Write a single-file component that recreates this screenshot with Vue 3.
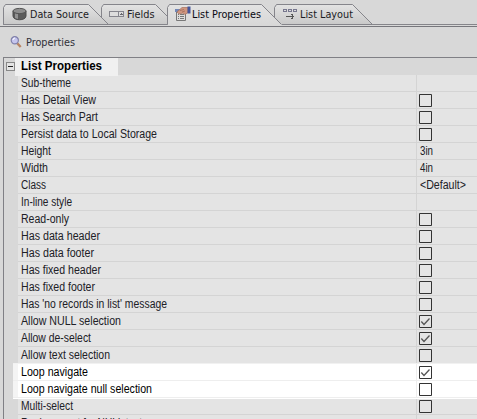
<script setup>
const tabs = [
  { name: 'Data Source', icon: 'db', w: 106, l: 59 },
  { name: 'Fields', icon: 'field', w: 75, l: 27.5 },
  { name: 'List Properties', icon: 'props', w: 115, l: 69, active: true },
  { name: 'List Layout', icon: 'layout', w: 99, l: 53 }
]
const rows = [
  ['Sub-theme', '', 50], ['Has Detail View', false, 75], ['Has Search Part', false, 77],
  ['Persist data to Local Storage', false, 136], ['Height', '3in', 30], ['Width', '4in', 27],
  ['Class', '<Default>', 25], ['In-line style', '', 51], ['Read-only', false, 48],
  ['Has data header', false, 79], ['Has data footer', false, 73], ['Has fixed header', false, 80],
  ['Has fixed footer', false, 74], ["Has 'no records in list' message", false, 146],
  ['Allow NULL selection', true, 100], ['Allow de-select', true, 70],
  ['Allow text selection', false, 89], ['Loop navigate', true, 67],
  ['Loop navigate null selection', false, 131], ['Multi-select', false, 52],
  ['Replacement for NULL text', '', 121]
]
const valueWidth = { '3in': 13, '4in': 13, '<Default>': 46 }
const shape = (w, active) => `M.5 20.5V3.5L2.5 .5H${w - 20.5}L${w - .5} 20.5${active ? '' : 'Z'}`
</script>

<template>
  <main class="window">
    <nav class="tabs">
      <div v-for="tab in tabs" :key="tab.name" class="tab" :class="[tab.icon, { active: tab.active }]">
        <svg class="outline" :width="tab.w" height="22">
          <defs><linearGradient :id="tab.icon" x2="0" y2="1"><stop stop-color="#e3e3e3" /><stop offset="1" :stop-color="tab.active ? '#d8d8d8' : '#c9c9c9'" /></linearGradient></defs>
          <path v-if="tab.active" :d="`M1 20h${tab.w - 1}v1.5H1z`" fill="#d8d8d8" />
          <path :d="shape(tab.w, tab.active)" :fill="`url(#${tab.icon})`" stroke="#85858b" />
        </svg>
        <svg v-if="tab.icon === 'db'" class="icon" width="16" height="16">
          <path d="M1 5v5c0 5 13 5 13 0V5" fill="#5b5b5b" stroke="#4c4c4c" />
          <path d="M3 7v5l3 1V8" fill="#929292" />
          <ellipse cx="7.5" cy="5" rx="6.5" ry="2.6" fill="#8d8d8d" stroke="#555" />
        </svg>
        <svg v-else-if="tab.icon === 'field'" class="icon" width="16" height="16" shape-rendering="crispEdges">
          <path d="M.5 5.5h14v5H.5zM9.5 5.5v5" fill="#ddd" stroke="#85858d" />
          <path d="M12 7v1h-1v1h3V8h-1V7" fill="#68686f" />
        </svg>
        <svg v-else-if="tab.icon === 'props'" class="icon" width="16" height="16">
          <path d="M1.5 4.5h9v10h-9z" fill="#ddd" stroke="#777" />
          <path d="M0 3h6v3H0z" fill="#7387b5" />
          <path d="M3 8.5h1m1 0h4M3 10.5h1m1 0h4M3 12.5h1m1 0h4" stroke="#777" />
          <path d="M2 6l5-4.5h6v5l-3 2-2-1.5-4 1z" fill="#cf9680" stroke="#a8705c" stroke-width=".7" />
          <path d="M5 4.5l4-1M7 6l3-1" stroke="#9b6655" stroke-width=".7" />
          <path d="M12.5 .5h3v7h-3z" fill="#46569a" />
        </svg>
        <svg v-else class="icon" width="16" height="16" shape-rendering="crispEdges">
          <path d="M.5 3.5h3v2h-3zM5.5 3.5h3v2h-3zM10.5 3.5h3v2h-3z" fill="none" stroke="#77778e" />
          <path d="M3 10.5h8M9.5 8v5M8.5 8v1M8.5 12v1" fill="none" stroke="#555" />
        </svg>
        <svg class="caption" :width="tab.l + 2" height="18"><text x="0" y="12" :textLength="tab.l" lengthAdjust="spacingAndGlyphs">{{ tab.name }}</text></svg>
      </div>
    </nav>
    <header class="toolbar">
      <svg class="lens" width="14" height="14"><path d="M7 7l3.7 4" stroke="#b88463" stroke-width="2.4" /><circle cx="4.8" cy="4.3" r="3.6" fill="#c5c5ee" stroke="#8080aa" stroke-width="1.2" /><path d="M3 4q0-2 2-2" fill="none" stroke="#fff" /></svg>
      <svg class="caption" width="54" height="18"><text x="0" y="13" textLength="49" lengthAdjust="spacingAndGlyphs">Properties</text></svg>
    </header>
    <section class="grid">
      <header class="group">
        <svg class="collapse" width="9" height="9" shape-rendering="crispEdges"><path d="M.5 .5h8v8h-8z" fill="#e4e4e4" stroke="#888" /><path d="M2 4.5h5" stroke="#222" /></svg>
        <h1><svg width="100" height="18"><text x="6" y="12" textLength="81" lengthAdjust="spacingAndGlyphs">List Properties</text></svg></h1>
      </header>
      <div v-for="([name, value, length], i) in rows" :key="name" class="row" :class="{ lit: i === 17 || i === 18, first: i === 17, last: i === 18 }">
        <div class="name"><svg width="180" height="16"><text x="0" y="12" :textLength="length" lengthAdjust="spacingAndGlyphs">{{ name }}</text></svg></div>
        <div class="value">
          <svg v-if="typeof value === 'boolean'" class="check" width="13" height="13"><path d="M.5 .5h12v12H.5z" fill="none" stroke="#333" /><path v-if="value" d="M2.3 6.5l2.7 3 5.5-6" fill="none" stroke="#555" stroke-width="1.3" /></svg>
          <svg v-else-if="value" width="55" height="16"><text x="0" y="12" :textLength="valueWidth[value]" lengthAdjust="spacingAndGlyphs">{{ value }}</text></svg>
        </div>
      </div>
    </section>
  </main>
</template>

<style>
body { overflow: hidden; background: #d8d8d8; }
</style>
<style scoped>
* { box-sizing: border-box; }
svg { display: block; flex: none; overflow: visible; }
text { fill: currentColor; }
.window { width: 477px; height: 419px; overflow: hidden; background: #d8d8d8; color: #1c1c22; font: 11px "DejaVu Sans Condensed", "DejaVu Sans", sans-serif; font-stretch: condensed; }
.tabs { height: 27px; padding: 4px 0 0 3px; display: flex; border-bottom: 1px solid #77777c; background: linear-gradient(#85858a, #85858a) 3px 24px / 474px 1px no-repeat; }
.tab { position: relative; display: flex; height: 21px; flex: none; padding: 2px 0 0 9px; color: #1c1c24; }
.tab.db { width: 98px; z-index: 1; }
.tab.field { width: 66px; padding-left: 8px; }
.tab.props { width: 107px; z-index: 2; padding-left: 8px; }
.tab.layout { width: 99px; padding-left: 9px; }
.outline { position: absolute; left: 0; top: 0; }
.icon { position: relative; margin-right: 2px; }
.props .icon, .layout .icon { margin-right: 1px; }
.caption { position: relative; }
.tab.active { color: #080812; }
.toolbar { height: 30px; display: flex; padding: 6px 0 0 10px; color: #303038; }
.lens { margin: 3px 2px 0 0; }
.grid { margin-left: 3px; border-left: 1px solid #808085; border-top: 1px solid #808085; padding-left: 14px; font-family: "Liberation Sans", Arial, sans-serif; font-size: 12px; font-stretch: normal; }
.group { height: 17px; margin-left: -14px; display: flex; padding-left: 2px; position: relative; z-index: 2; }
.collapse { margin-top: 4px; }
h1 { background: #f0f0f0; width: 103px; height: 18px; margin: 0; font-size: 12px; color: #000; }
.row { display: flex; height: 17px; border-bottom: 1px solid #d4d4d4; background: #e4e4e4; color: #202026; }
.name { width: 399px; padding-left: 3px; border-right: 1px solid #d4d4d4; }
.value { padding: 0 0 0 3px; }
.check { margin: 2px 0 0 -1px; }
.lit { position: relative; margin-left: -5px; padding-left: 5px; background: linear-gradient(90deg, #f4f4f4 5px, #fff 5px); border-color: #eee; color: #000; }
.lit .name { border-color: #eee; }
.first { box-shadow: 0 -1px #f1f1f1; }
.last { box-shadow: 0 1px #fff; }
</style>
